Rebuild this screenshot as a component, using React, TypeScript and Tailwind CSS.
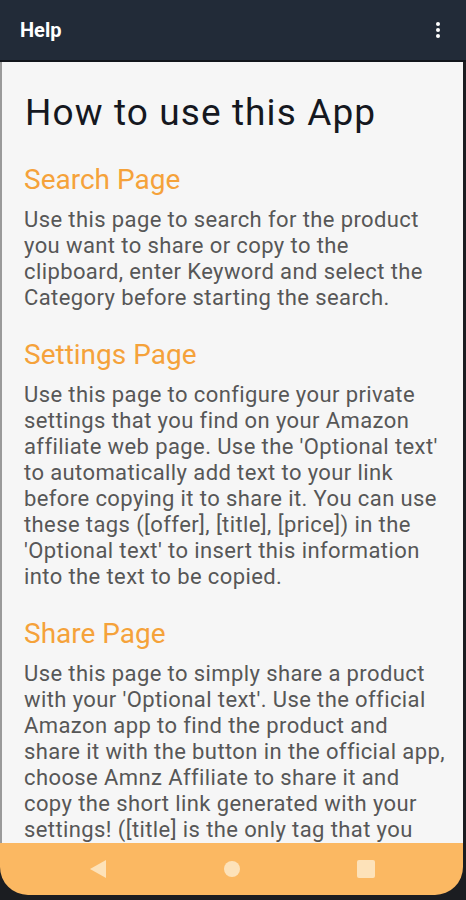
const SECTIONS = [
  {
    title: "Search Page",
    text: "Use this page to search for the product you want to share or copy to the clipboard, enter Keyword and select the Category before starting the search.",
  },
  {
    title: "Settings Page",
    text: "Use this page to configure your private settings that you find on your Amazon affiliate web page. Use the 'Optional text' to automatically add text to your link before copying it to share it. You can use these tags ([offer], [title], [price]) in the 'Optional text' to insert this information into the text to be copied.",
  },
  {
    title: "Share Page",
    text: "Use this page to simply share a product with your 'Optional text'. Use the official Amazon app to find the product and share it with the button in the official app, choose Amnz Affiliate to share it and copy the short link generated with your settings! ([title] is the only tag that you can use here.)",
  },
];

function Kebab() {
  return (
    <div className="flex flex-col items-center gap-[2px]">
      <span className="w-[4px] h-[4px] rounded-full bg-white" />
      <span className="w-[4px] h-[4px] rounded-full bg-white" />
      <span className="w-[4px] h-[4px] rounded-full bg-white" />
    </div>
  );
}

export default function App() {
  return (
    <div
      className="w-[466px] h-[900px] bg-[#1b1d21] flex flex-col overflow-hidden"
      style={{ fontFamily: "Roboto, 'Noto Sans', sans-serif" }}
    >
      {/* Toolbar */}
      <header className="h-[62px] shrink-0 bg-[#222b38] border-b-2 border-[#12161c] flex items-center justify-between pl-[20px] pr-[26px]">
        <span className="text-white text-[20px] font-bold">Help</span>
        <Kebab />
      </header>

      {/* Content */}
      <main className="flex-1 min-h-0 overflow-hidden bg-[#f6f6f6] border-l-2 border-[#9a9a9a] mr-[3px] pl-[22px] pr-[18px] pt-[29px]">
        <h1 className="text-[37px] leading-[44px] tracking-[1.1px] text-[#15181f] ml-[1px]">How to use this App</h1>
        <div className="mt-[28px]">
          {SECTIONS.map((s, i) => (
            <section key={s.title} className={i > 0 ? "mt-[27px]" : ""}>
              <h2 className="text-[28px] leading-[33px] text-[#f5a23a]">{s.title}</h2>
              <p className="mt-[11px] text-[22px] leading-[26px] tracking-[0.4px] text-[#575757]">{s.text}</p>
            </section>
          ))}
        </div>
      </main>

      {/* Nav bar */}
      <nav className="h-[52px] shrink-0 mb-[5px] mr-[3px] bg-[#fbb862] rounded-b-[28px] flex items-center justify-center gap-[117px]">
        <svg width="18" height="18" viewBox="0 0 18 18">
          <polygon points="17,0 17,18 1,9" fill="#fde2b9" />
        </svg>
        <span className="w-[16px] h-[16px] rounded-full bg-[#fde2b9]" />
        <span className="w-[18px] h-[18px] rounded-[2px] bg-[#fde2b9]" />
      </nav>
    </div>
  );
}
